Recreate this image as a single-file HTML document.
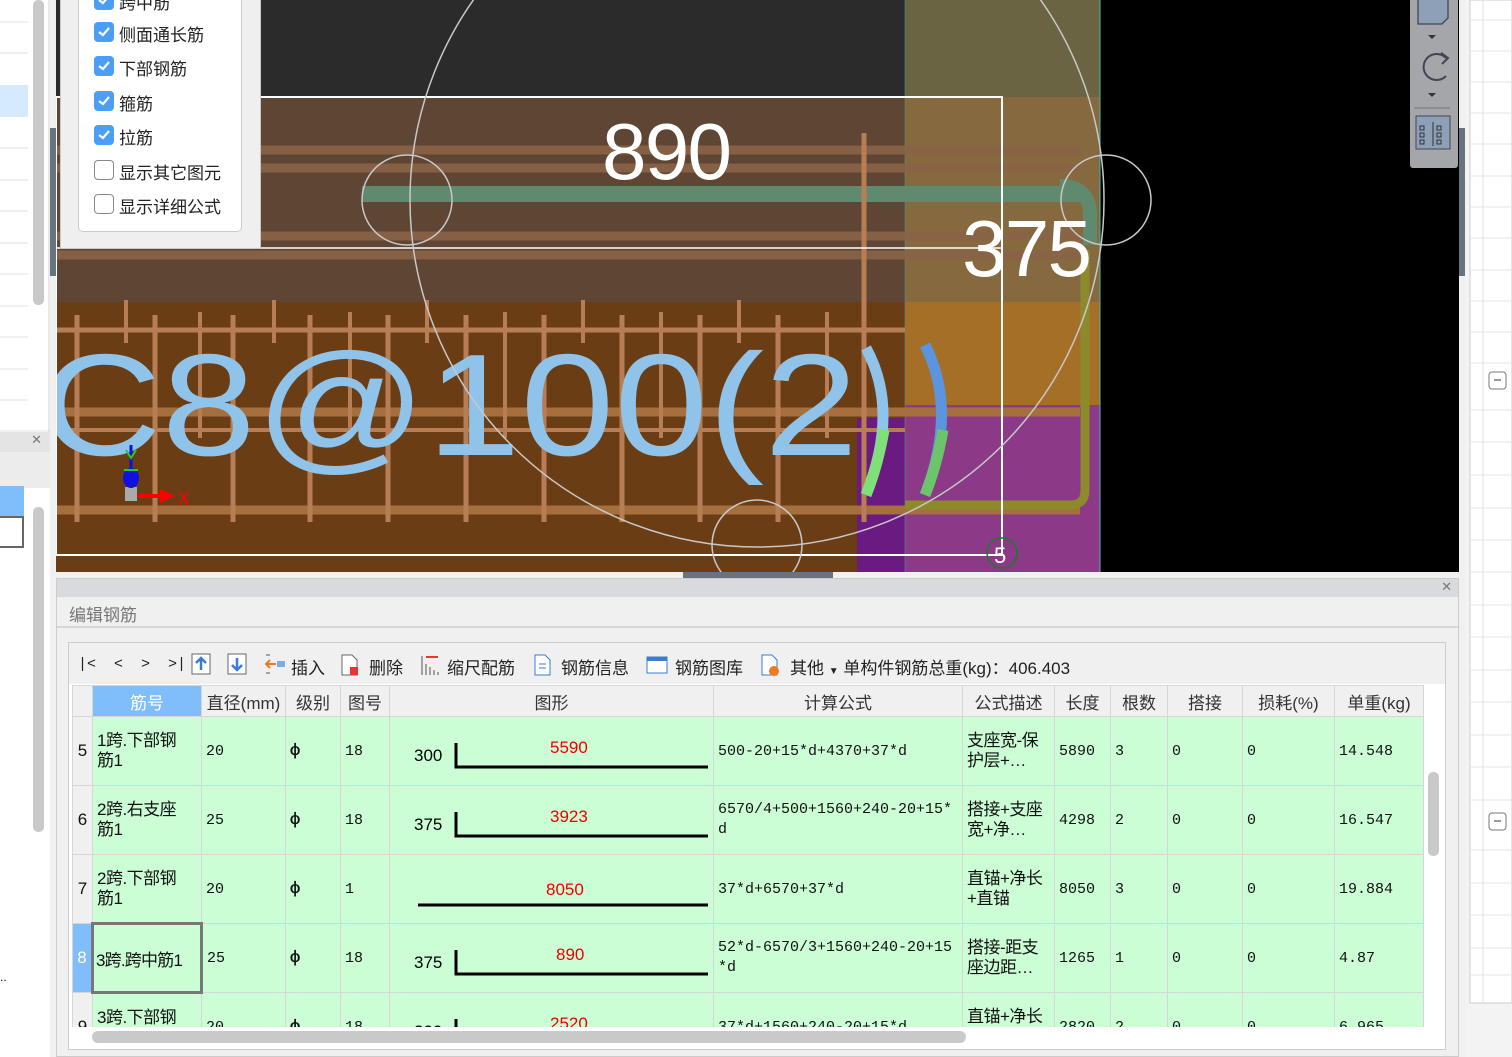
<!DOCTYPE html>
<html><head><meta charset="utf-8"><style>
*{margin:0;padding:0;box-sizing:border-box}
body{width:1512px;height:1057px;overflow:hidden;background:#f0f0f0;font-family:"Liberation Sans","Noto Sans CJK SC",sans-serif;position:relative}
.a{position:absolute}
.cb{position:absolute;left:94px;width:20px;height:20px;border-radius:4px;background:#4b9ef5}
.cb.off{background:#fff;border:1px solid #888}
.cb svg{position:absolute;left:3px;top:4px}
.lbl{position:absolute;left:119px;font-size:17px;color:#222}
.tb{position:absolute;top:654px;font-size:17px;color:#222}
table{border-collapse:collapse;position:absolute;left:3px;top:0;font-family:"Liberation Mono","Noto Sans CJK SC",monospace;font-size:15px;table-layout:fixed}
td,th{border:1px solid #d6d6d6;overflow:hidden;white-space:nowrap}
th{height:31px;background:#f0f0f0;font-weight:normal;font-family:"Liberation Sans","Noto Sans CJK SC",sans-serif;font-size:17px;color:#333}
td{height:69px;background:#ccfed6;padding-left:4px;vertical-align:middle;color:#111}
td.n{background:#f0f0f0;padding:0;text-align:center;font-size:17px;font-family:"Liberation Sans",sans-serif}
td.w{white-space:normal;word-break:break-all;line-height:20px;font-family:"Liberation Sans","Noto Sans CJK SC",sans-serif;font-size:17px;letter-spacing:-0.5px;padding-right:8px}
td.nm{padding-right:16px}
td.f{white-space:normal;word-break:break-all;line-height:20px;padding-right:6px}
td.g{font-weight:bold;font-size:17px}
</style></head><body>
<div class="a" style="left:0;top:0;width:50px;height:430px;background:#fff"></div>
<div class="a" style="left:0;top:85px;width:28px;height:32px;background:#d6eaff"></div>
<svg class="a" style="left:0;top:0" width="50" height="1057">
<g stroke="#e2e2e2"><line x1="0" y1="22" x2="28" y2="22"/><line x1="0" y1="53" x2="28" y2="53"/><line x1="0" y1="148" x2="28" y2="148"/><line x1="0" y1="180" x2="28" y2="180"/><line x1="0" y1="211" x2="28" y2="211"/><line x1="0" y1="243" x2="28" y2="243"/><line x1="0" y1="274" x2="28" y2="274"/><line x1="0" y1="306" x2="28" y2="306"/><line x1="0" y1="337" x2="28" y2="337"/><line x1="0" y1="369" x2="28" y2="369"/><line x1="0" y1="400" x2="28" y2="400"/>
<line x1="0" y1="580" x2="24" y2="580"/><line x1="0" y1="612" x2="24" y2="612"/><line x1="0" y1="644" x2="24" y2="644"/><line x1="0" y1="676" x2="24" y2="676"/><line x1="0" y1="708" x2="24" y2="708"/><line x1="0" y1="740" x2="24" y2="740"/><line x1="0" y1="772" x2="24" y2="772"/><line x1="0" y1="804" x2="24" y2="804"/><line x1="0" y1="836" x2="24" y2="836"/><line x1="0" y1="868" x2="24" y2="868"/><line x1="0" y1="900" x2="24" y2="900"/><line x1="0" y1="932" x2="24" y2="932"/><line x1="0" y1="964" x2="24" y2="964"/><line x1="0" y1="996" x2="24" y2="996"/><line x1="0" y1="1028" x2="24" y2="1028"/></g>
<rect x="33" y="0" width="11" height="305" rx="5" fill="#c9c9c9"/>
<line x1="49" y1="0" x2="49" y2="1057" stroke="#d0d0d0"/>
</svg>
<div class="a" style="left:0;top:432px;width:50px;height:20px;background:#e4e4e4;font-size:13px;color:#777;text-align:right;padding-right:8px">✕</div>
<div class="a" style="left:0;top:452px;width:50px;height:36px;background:#ececec"></div>
<div class="a" style="left:0;top:488px;width:50px;height:569px;background:#fff"></div>
<div class="a" style="left:0;top:486px;width:24px;height:30px;background:#80bdfb"></div>
<div class="a" style="left:0;top:516px;width:24px;height:32px;border:2px solid #666;border-left:none;background:#fff"></div>
<div class="a" style="left:33px;top:507px;width:11px;height:325px;border-radius:5px;background:#c9c9c9"></div>
<div class="a" style="left:0;top:970px;font-size:12px">..</div>
<div class="a" style="left:50px;top:128px;width:6px;height:148px;background:#687380"></div>

<svg class="a" style="left:56px;top:0" width="1403" height="572" viewBox="56 0 1403 572">
<rect x="56" y="0" width="1403" height="572" fill="#000"/>
<rect x="56" y="0" width="849" height="97" fill="#2b2b2b"/>
<rect x="905" y="0" width="195" height="97" fill="#6a6442"/>
<rect x="56" y="97" width="849" height="205" fill="#5f4533"/>
<rect x="56" y="302" width="849" height="270" fill="#6a3d15"/>
<rect x="857" y="418" width="48" height="154" fill="#6a1a80"/>
<rect x="905" y="97" width="195" height="205" fill="#87693f"/>
<rect x="905" y="302" width="195" height="108" fill="#a66f27"/>
<rect x="905" y="405" width="195" height="167" fill="#8c3a88"/>
<line x1="1100" y1="0" x2="1100" y2="572" stroke="#4fb8b0"/>
<line x1="905" y1="0" x2="905" y2="572" stroke="#4e8f8f" stroke-width="0.6"/>
<g stroke="#8a6346" stroke-width="9" opacity="0.9">
<line x1="56" y1="150" x2="1080" y2="150"/><line x1="56" y1="168" x2="1080" y2="168"/>
<line x1="56" y1="236" x2="1080" y2="236"/><line x1="56" y1="255" x2="1080" y2="255"/></g>
<g stroke="#a5703d" stroke-width="9"><line x1="56" y1="412" x2="1080" y2="412"/><line x1="56" y1="510" x2="1080" y2="510"/></g>
<path d="M1085 250 V 490 Q1085 505 1070 505 H905" fill="none" stroke="#8d8a2c" stroke-width="9"/>
<rect x="362" y="186" width="718" height="16" fill="#5f8a6e"/>
<path d="M1060 186 Q1090 186 1090 215 V245" fill="none" stroke="#5f8a6e" stroke-width="14"/>
<g stroke="#b77e55" stroke-width="5">
<line x1="77" y1="315" x2="77" y2="522"/><line x1="155" y1="315" x2="155" y2="522"/><line x1="233" y1="315" x2="233" y2="522"/><line x1="310" y1="315" x2="310" y2="522"/><line x1="388" y1="315" x2="388" y2="522"/><line x1="466" y1="315" x2="466" y2="522"/><line x1="544" y1="315" x2="544" y2="522"/><line x1="622" y1="315" x2="622" y2="522"/><line x1="700" y1="315" x2="700" y2="522"/><line x1="778" y1="315" x2="778" y2="522"/><line x1="864" y1="133" x2="864" y2="522"/></g>
<g stroke="#b77e55" stroke-width="4">
<line x1="126" y1="300" x2="126" y2="343"/><line x1="200" y1="312" x2="200" y2="438"/><line x1="274" y1="300" x2="274" y2="343"/><line x1="350" y1="312" x2="350" y2="438"/><line x1="427" y1="300" x2="427" y2="343"/><line x1="505" y1="312" x2="505" y2="438"/><line x1="583" y1="300" x2="583" y2="343"/><line x1="661" y1="312" x2="661" y2="438"/><line x1="739" y1="300" x2="739" y2="343"/><line x1="827" y1="312" x2="827" y2="438"/></g>
<line x1="56" y1="330" x2="905" y2="330" stroke="#b77e55" stroke-width="5"/>
<line x1="56" y1="430" x2="905" y2="430" stroke="#b77e55" stroke-width="4"/>
<text x="40" y="455" font-family="Liberation Sans,sans-serif" font-size="145" fill="#8fc3ea" textLength="818" lengthAdjust="spacingAndGlyphs">C8@100(2</text>
<path d="M866 348 Q900 410 866 495" fill="none" stroke="#8fc3ea" stroke-width="11"/>
<path d="M884 430 Q878 465 866 495" fill="none" stroke="#7fe07a" stroke-width="11"/>
<path d="M925 345 Q958 410 925 495" fill="none" stroke="#5b95e0" stroke-width="11"/>
<path d="M943 430 Q937 465 925 495" fill="none" stroke="#6cc56a" stroke-width="11"/>
<rect x="56" y="97" width="946" height="458" fill="none" stroke="#fff" stroke-width="2"/>
<line x1="56" y1="248" x2="1002" y2="248" stroke="#fff" stroke-width="1.5"/>
<g fill="none" stroke="#c8c8c8" stroke-width="1.5">
<circle cx="757" cy="200" r="347"/><circle cx="407" cy="200" r="45"/><circle cx="1106" cy="200" r="45"/><circle cx="757" cy="545" r="45"/></g>
<circle cx="1002" cy="553" r="15" fill="none" stroke="#1a7a2a" stroke-width="1.5"/>
<text x="994" y="563" font-family="Liberation Sans,sans-serif" font-size="22" fill="#fff">5</text>
<text x="602" y="179" font-family="Liberation Sans,sans-serif" font-size="80" fill="#fff" textLength="130">890</text>
<text x="962" y="276" font-family="Liberation Sans,sans-serif" font-size="80" fill="#fff" textLength="130">375</text>
<rect x="125" y="487" width="12" height="14" fill="#aaa"/>
<ellipse cx="131" cy="478" rx="8" ry="10" fill="#1010e0"/>
<line x1="131" y1="445" x2="131" y2="470" stroke="#1010e0" stroke-width="3"/>
<path d="M126 450 L131 458 L136 450 M124 470 L138 470" stroke="#2c2" stroke-width="2" fill="none"/>
<path d="M138 494 H160 V489 L175 496 L160 503 V498 H138Z" fill="#f00"/>
<text x="178" y="505" font-family="Liberation Sans,sans-serif" font-size="18" fill="#f00">X</text>
</svg>
<div class="a" style="left:683px;top:572px;width:150px;height:6px;background:#687380"></div>
<div class="a" style="left:1410px;top:0;width:48px;height:168px;background:#a4a6aa;border-radius:0 0 3px 3px"></div>
<svg class="a" style="left:1410px;top:0" width="48" height="168">
<path d="M8 0 V24 H32 L38 18 V0" fill="#8e9fb8" stroke="#445" stroke-width="1.3"/>
<path d="M18 35 h8 l-4 4z" fill="#333"/>
<path d="M36 58 A13 13 0 1 0 36 76" fill="none" stroke="#445" stroke-width="2"/><path d="M31 53 L38 58 L32 64" fill="none" stroke="#445" stroke-width="2"/>
<path d="M18 93 h8 l-4 4z" fill="#333"/>
<line x1="4" y1="108" x2="40" y2="108" stroke="#777"/>
<rect x="6" y="116" width="34" height="33" fill="#8e9fb8" stroke="#445"/>
<g stroke="#333" fill="none" stroke-width="1"><rect x="10" y="126" width="4" height="4"/><rect x="10" y="133" width="4" height="4"/><rect x="10" y="140" width="4" height="4"/><rect x="27" y="126" width="4" height="4"/><rect x="27" y="133" width="4" height="4"/><rect x="27" y="140" width="4" height="4"/><line x1="23" y1="122" x2="23" y2="146"/></g>
</svg>
<div class="a" style="left:1459px;top:128px;width:6px;height:148px;background:#687380"></div>
<div class="a" style="left:1465px;top:0;width:47px;height:1057px;background:#f3f3f3"></div>
<svg class="a" style="left:1465px;top:0" width="47" height="1057">
<rect x="5" y="0" width="42" height="1003" fill="#fff" stroke="#ccc"/>
<g stroke="#e0e0e0"><line x1="18" y1="0" x2="18" y2="1003"/></g>
<g stroke="#e4e4e4">
<line x1="5" y1="20" x2="47" y2="20"/><line x1="5" y1="51" x2="47" y2="51"/><line x1="5" y1="82" x2="47" y2="82"/><line x1="5" y1="113" x2="47" y2="113"/><line x1="5" y1="144" x2="47" y2="144"/><line x1="5" y1="176" x2="47" y2="176"/><line x1="5" y1="207" x2="47" y2="207"/><line x1="5" y1="238" x2="47" y2="238"/><line x1="5" y1="270" x2="47" y2="270"/><line x1="5" y1="301" x2="47" y2="301"/><line x1="5" y1="332" x2="47" y2="332"/><line x1="5" y1="363" x2="47" y2="363"/><line x1="5" y1="410" x2="47" y2="410"/><line x1="5" y1="442" x2="47" y2="442"/><line x1="5" y1="475" x2="47" y2="475"/><line x1="5" y1="508" x2="47" y2="508"/><line x1="5" y1="540" x2="47" y2="540"/><line x1="5" y1="572" x2="47" y2="572"/><line x1="5" y1="605" x2="47" y2="605"/><line x1="5" y1="637" x2="47" y2="637"/><line x1="5" y1="670" x2="47" y2="670"/><line x1="5" y1="702" x2="47" y2="702"/><line x1="5" y1="735" x2="47" y2="735"/><line x1="5" y1="767" x2="47" y2="767"/><line x1="5" y1="800" x2="47" y2="800"/><line x1="5" y1="850" x2="47" y2="850"/><line x1="5" y1="883" x2="47" y2="883"/><line x1="5" y1="915" x2="47" y2="915"/><line x1="5" y1="948" x2="47" y2="948"/><line x1="5" y1="975" x2="47" y2="975"/></g>
<rect x="24" y="372" width="17" height="17" rx="3" fill="#fff" stroke="#777"/><line x1="29" y1="380" x2="36" y2="380" stroke="#333"/>
<rect x="24" y="813" width="17" height="17" rx="3" fill="#fff" stroke="#777"/><line x1="29" y1="821" x2="36" y2="821" stroke="#333"/>
</svg>

<div class="a" style="left:60px;top:0;width:201px;height:249px;background:#efefef;border:1px solid #c8c8c8;border-top:none"></div>
<div class="a" style="left:78px;top:0;width:164px;height:232px;background:#fff;border:1px solid #ccc;border-top:none;border-radius:0 0 5px 5px"></div>
<div class="cb" style="top:-10px"><svg width="14" height="12"><path d="M2 6 L6 9 L12 2" stroke="#fff" stroke-width="2.2" fill="none"/></svg></div>
<div class="lbl" style="top:-11px">跨中筋</div>
<div class="cb" style="top:22px"><svg width="14" height="12"><path d="M2 6 L6 9 L12 2" stroke="#fff" stroke-width="2.2" fill="none"/></svg></div>
<div class="lbl" style="top:21px">侧面通长筋</div>
<div class="cb" style="top:56px"><svg width="14" height="12"><path d="M2 6 L6 9 L12 2" stroke="#fff" stroke-width="2.2" fill="none"/></svg></div>
<div class="lbl" style="top:55px">下部钢筋</div>
<div class="cb" style="top:91px"><svg width="14" height="12"><path d="M2 6 L6 9 L12 2" stroke="#fff" stroke-width="2.2" fill="none"/></svg></div>
<div class="lbl" style="top:90px">箍筋</div>
<div class="cb" style="top:125px"><svg width="14" height="12"><path d="M2 6 L6 9 L12 2" stroke="#fff" stroke-width="2.2" fill="none"/></svg></div>
<div class="lbl" style="top:124px">拉筋</div>
<div class="cb off" style="top:160px"></div><div class="lbl" style="top:159px">显示其它图元</div>
<div class="cb off" style="top:194px"></div><div class="lbl" style="top:193px">显示详细公式</div>

<div class="a" style="left:56px;top:578px;width:1403px;height:479px;background:#f0f0f0;border:1px solid #ccc"></div>
<div class="a" style="left:57px;top:579px;width:1401px;height:18px;background:#d9dadd;font-size:13px;color:#777;text-align:right;padding-right:6px">✕</div>
<div class="a" style="left:57px;top:597px;width:1401px;height:31px;border-bottom:2px solid #d6d6d6;font-size:17px;color:#777;padding:4px 12px">编辑钢筋</div>
<div class="a" style="left:68px;top:642px;width:1378px;height:408px;background:#fff;border:1px solid #ccc"></div>
<div class="a" style="left:69px;top:643px;width:1376px;height:41px;background:#f0f0f0"></div>
<div class="tb" style="left:78px;font-family:'Liberation Mono',monospace;font-size:15px;top:656px">|&lt;&nbsp;&nbsp;&lt;&nbsp;&nbsp;&gt;&nbsp;&nbsp;&gt;|</div>
<svg class="a" style="left:190px;top:652px" width="590" height="26">
<rect x="2" y="2" width="18" height="20" fill="#fff" stroke="#666"/><path d="M11 18 V7 M6 11 L11 6 L16 11" stroke="#3a7bd5" stroke-width="2.5" fill="none"/>
<rect x="38" y="2" width="18" height="20" fill="#fff" stroke="#666"/><path d="M47 6 V17 M42 13 L47 18 L52 13" stroke="#3a7bd5" stroke-width="2.5" fill="none"/>
<path d="M76 12 H86 M80 8 L76 12 L80 16" stroke="#f07b1e" stroke-width="2" fill="none"/><rect x="87" y="9" width="8" height="6" fill="#7aaee8"/><path d="M76 3 h4 M76 21 h4" stroke="#555"/>
<path d="M152 3 h10 l5 5 v15 h-15z" fill="#fff" stroke="#666"/><rect x="160" y="15" width="8" height="8" fill="#e33"/>
<path d="M232 4 V23 M236 12 V23 M240 15 V23 M244 18 V23 M248 20 V23" stroke="#555"/><path d="M236 5 H248" stroke="#e33" stroke-width="2"/>
<path d="M345 3 h10 l5 5 v15 h-15z" fill="#fff" stroke="#3a7bd5"/><path d="M349 12 h7 M349 16 h7" stroke="#3a7bd5"/>
<rect x="457" y="5" width="20" height="16" fill="#fff" stroke="#3a7bd5"/><rect x="457" y="5" width="20" height="4" fill="#3a7bd5"/>
<path d="M572 3 h10 l5 5 v15 h-15z" fill="#fff" stroke="#3a7bd5"/><circle cx="584" cy="19" r="5" fill="#f07b1e"/>
</svg>
<div class="tb" style="left:291px">插入</div>
<div class="tb" style="left:369px">删除</div>
<div class="tb" style="left:447px">缩尺配筋</div>
<div class="tb" style="left:561px">钢筋信息</div>
<div class="tb" style="left:675px">钢筋图库</div>
<div class="tb" style="left:790px">其他 <span style="font-size:10px">▼</span> 单构件钢筋总重(kg)：406.403</div>

<div class="a" style="left:69px;top:685px;width:1359px;height:342px;overflow:hidden">
<table>
<colgroup><col style="width:20px"><col style="width:109px"><col style="width:84px"><col style="width:55px"><col style="width:49px"><col style="width:324px"><col style="width:249px"><col style="width:92px"><col style="width:56px"><col style="width:57px"><col style="width:75px"><col style="width:92px"><col style="width:89px"></colgroup>
<tr><th></th><th style="background:#80bdfb;color:#fff">筋号</th><th>直径(mm)</th><th>级别</th><th>图号</th><th>图形</th><th>计算公式</th><th>公式描述</th><th>长度</th><th>根数</th><th>搭接</th><th>损耗(%)</th><th>单重(kg)</th></tr>
<tr><td class="n">5</td><td class="w nm">1跨.下部钢筋1</td><td>20</td><td class="g">ф</td><td>18</td><td><svg width="318" height="60"><text x="20" y="42" font-size="17" font-family="Liberation Sans">300</text><path d="M62 24 V48 H314" stroke="#000" stroke-width="3" fill="none"/><text x="156" y="34" font-size="17" fill="#e00" font-family="Liberation Sans">5590</text></svg></td><td>500-20+15*d+4370+37*d</td><td class="w">支座宽-保护层+…</td><td>5890</td><td>3</td><td>0</td><td>0</td><td>14.548</td></tr>
<tr><td class="n">6</td><td class="w nm">2跨.右支座筋1</td><td>25</td><td class="g">ф</td><td>18</td><td><svg width="318" height="60"><text x="20" y="42" font-size="17" font-family="Liberation Sans">375</text><path d="M62 24 V48 H314" stroke="#000" stroke-width="3" fill="none"/><text x="156" y="34" font-size="17" fill="#e00" font-family="Liberation Sans">3923</text></svg></td><td class="f">6570/4+500+1560+240-20+15*d</td><td class="w">搭接+支座宽+净…</td><td>4298</td><td>2</td><td>0</td><td>0</td><td>16.547</td></tr>
<tr><td class="n">7</td><td class="w nm">2跨.下部钢筋1</td><td>20</td><td class="g">ф</td><td>1</td><td><svg width="318" height="60"><path d="M24 48 H314" stroke="#000" stroke-width="3"/><text x="152" y="38" font-size="17" fill="#e00" font-family="Liberation Sans">8050</text></svg></td><td>37*d+6570+37*d</td><td class="w">直锚+净长+直锚</td><td>8050</td><td>3</td><td>0</td><td>0</td><td>19.884</td></tr>
<tr><td class="n" style="background:#80bdfb;color:#fff">8</td><td style="border:3px solid #777;font-family:'Liberation Sans','Noto Sans CJK SC',sans-serif;font-size:17px;padding-left:2px;letter-spacing:-0.8px">3跨.跨中筋1</td><td>25</td><td class="g">ф</td><td>18</td><td><svg width="318" height="60"><text x="20" y="42" font-size="17" font-family="Liberation Sans">375</text><path d="M62 24 V48 H314" stroke="#000" stroke-width="3" fill="none"/><text x="162" y="34" font-size="17" fill="#e00" font-family="Liberation Sans">890</text></svg></td><td class="f">52*d-6570/3+1560+240-20+15*d</td><td class="w">搭接-距支座边距…</td><td>1265</td><td>1</td><td>0</td><td>0</td><td>4.87</td></tr>
<tr><td class="n">9</td><td class="w nm">3跨.下部钢筋1</td><td>20</td><td class="g">ф</td><td>18</td><td><svg width="318" height="60"><text x="20" y="42" font-size="17" font-family="Liberation Sans">300</text><path d="M62 24 V48 H314" stroke="#000" stroke-width="3" fill="none"/><text x="156" y="34" font-size="17" fill="#e00" font-family="Liberation Sans">2520</text></svg></td><td>37*d+1560+240-20+15*d</td><td class="w">直锚+净长+直锚</td><td>2820</td><td>2</td><td>0</td><td>0</td><td>6.965</td></tr>
</table>
</div>
<div class="a" style="left:1428px;top:772px;width:11px;height:84px;border-radius:5px;background:#c9c9c9"></div>
<div class="a" style="left:92px;top:1031px;width:874px;height:12px;border-radius:6px;background:#c9c9c9"></div>
</body></html>
